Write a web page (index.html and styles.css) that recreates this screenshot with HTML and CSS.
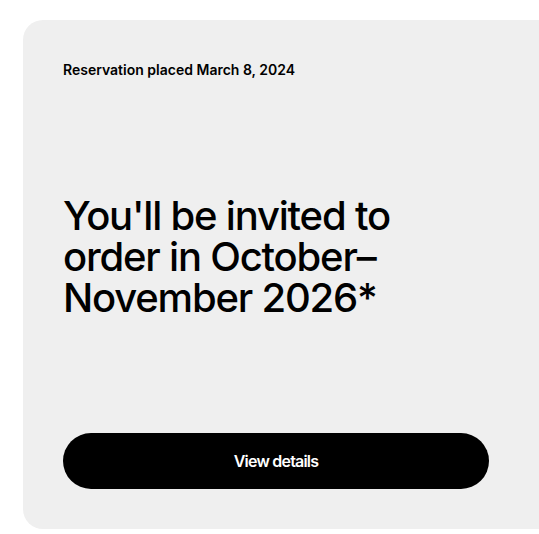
FILE: index.html
```html
<!DOCTYPE html>
<html lang="en">
<head>
<meta charset="utf-8">
<title>Reservation</title>
<link rel="stylesheet" href="styles.css">
</head>
<body>
<div class="page">
  <div class="card">
    <p class="placed">Reservation placed March 8, 2024</p>
    <h1 class="headline">You'll be invited to<br>order in October&ndash;<br>November 2026*</h1>
    <a href="#" class="btn">View details</a>
  </div>
</div>
</body>
</html>
```
FILE: styles.css
```css
html, body {
  margin: 0;
  padding: 0;
  background: #fff;
  overflow: hidden;
}
body {
  font-family: Inter, "Liberation Sans", sans-serif;
  color: #000;
}
.page {
  padding: 20px 0 0 23px;
}
/* grey reservation card, runs off the right edge */
.card {
  width: 560px;
  height: 509px;
  box-sizing: border-box;
  padding: 40px 40px;
  background: #efefef;
  border-radius: 20px;
  display: flex;
  flex-direction: column;
  justify-content: space-between;
  align-items: flex-start;
}
.placed {
  margin: 0;
  font-size: 14px;
  line-height: 20px;
  font-weight: 600;
  letter-spacing: 0;
}
.headline {
  margin: 0;
  font-size: 40px;
  line-height: 41px;
  font-weight: 550;
  letter-spacing: -1.2px;
}
.btn {
  display: flex;
  align-items: center;
  justify-content: center;
  width: 426px;
  height: 56px;
  border-radius: 28px;
  background: #000;
  color: #fff;
  text-decoration: none;
  font-size: 16px;
  font-weight: 600;
  letter-spacing: -0.8px;
}
```
